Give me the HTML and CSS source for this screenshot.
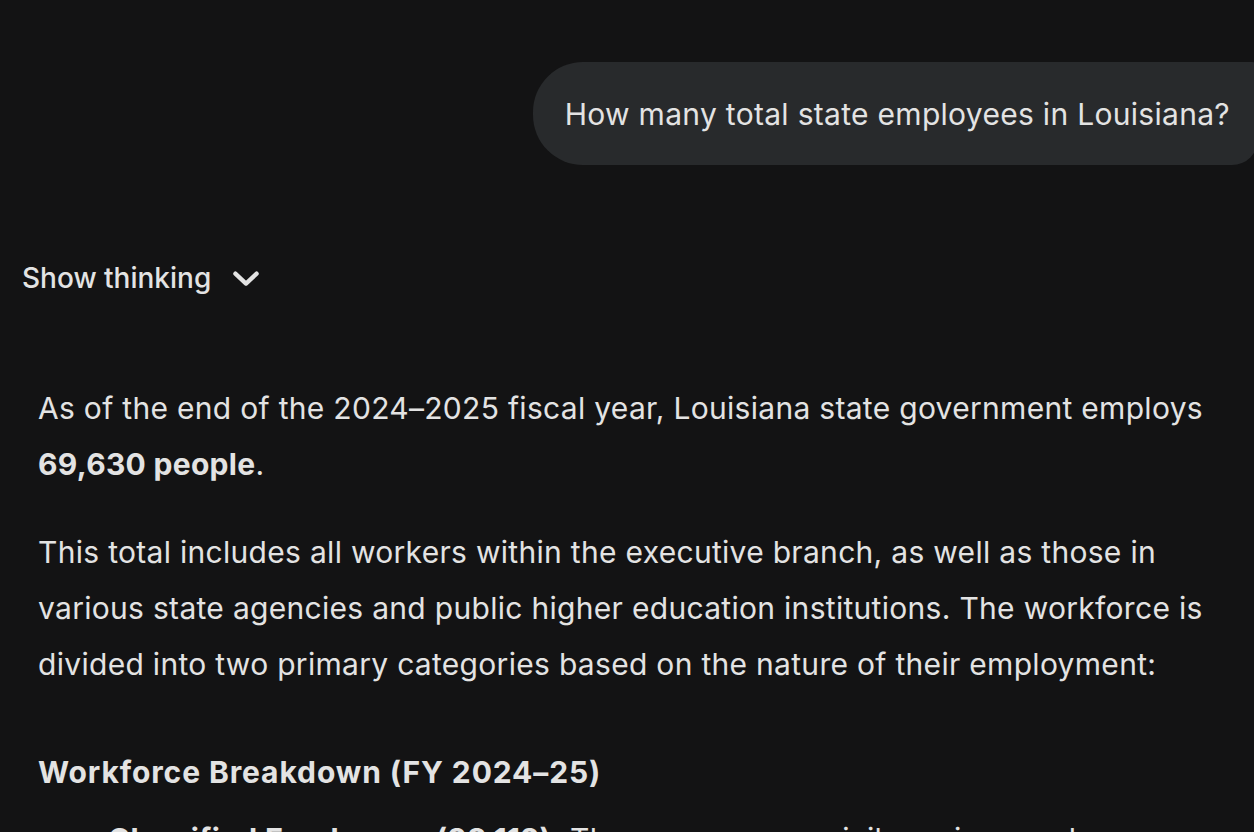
FILE: index.html
```html
<!DOCTYPE html>
<html lang="en">
<head>
<meta charset="utf-8">
<title>Gemini – Louisiana state employees</title>
<link rel="stylesheet" href="styles.css">
</head>
<body>
<main class="chat">
  <div class="user-row">
    <div class="user-bubble">How many total state employees in Louisiana?</div>
  </div>
  <button class="thinking-toggle" type="button">
    <span>Show thinking</span>
    <svg class="chev" viewBox="0 0 24 24" width="30" height="30" aria-hidden="true">
      <path d="M3.5 8.5 L12 16.5 L20.5 8.5" fill="none" stroke="currentColor" stroke-width="3.4" stroke-linecap="round" stroke-linejoin="round"/>
    </svg>
  </button>
  <div class="answer">
    <p>As of the end of the 2024–2025 fiscal year, Louisiana state government employs <strong>69,630 people</strong>.</p>
    <p>This total includes all workers within the executive branch, as well as those in various state agencies and public higher education institutions. The workforce is divided into two primary categories based on the nature of their employment:</p>
    <h3>Workforce Breakdown (FY 2024–25)</h3>
    <ul>
      <li><strong>Classified Employees (38,112):</strong> These are career civil service employees who are hired and promoted through a merit-based system.</li>
    </ul>
  </div>
</main>
</body>
</html>
```
FILE: styles.css
```css
html, body {
  margin: 0;
  padding: 0;
  background: #131314;
  overflow: hidden;
}
body {
  width: 1254px;
  height: 832px;
  color: #e3e3e3;
  font-family: Inter, Roboto, "Liberation Sans", sans-serif;
}
.chat {
  display: flex;
  flex-direction: column;
  padding-top: 62px;
}
.user-row {
  display: flex;
  justify-content: flex-end;
  margin-right: -4px;
}
.user-bubble {
  background: #282a2c;
  border-radius: 50px 6px 26px 50px;
  height: 103px;
  box-sizing: border-box;
  padding: 0 28px 0 32px;
  display: flex;
  align-items: center;
  font-size: 30px;
  letter-spacing: 0.3px;
}
.thinking-toggle {
  align-self: flex-start;
  display: flex;
  align-items: center;
  gap: 20px;
  margin: 93px 0 0 22px;
  padding: 0;
  background: none;
  border: 0;
  color: #e3e3e3;
  font-family: Inter, Roboto, "Liberation Sans", sans-serif;
  font-size: 28px;
  font-weight: 500;
  height: 40px;
}
.chev { display: block; }
.answer {
  padding: 0 24px 0 38px;
  margin-top: 82px;
  font-size: 30px;
  line-height: 56px;
  letter-spacing: 0.3px;
}
.answer p {
  margin: 0 0 32px;
}
.answer strong { font-weight: 700; }
.answer h3 {
  margin: 52px 0 0;
  font-size: 30px;
  line-height: 56px;
  font-weight: 700;
  letter-spacing: 0.9px;
}
.answer ul {
  margin: 11px 0 0;
  padding-left: 70px;
}
```
